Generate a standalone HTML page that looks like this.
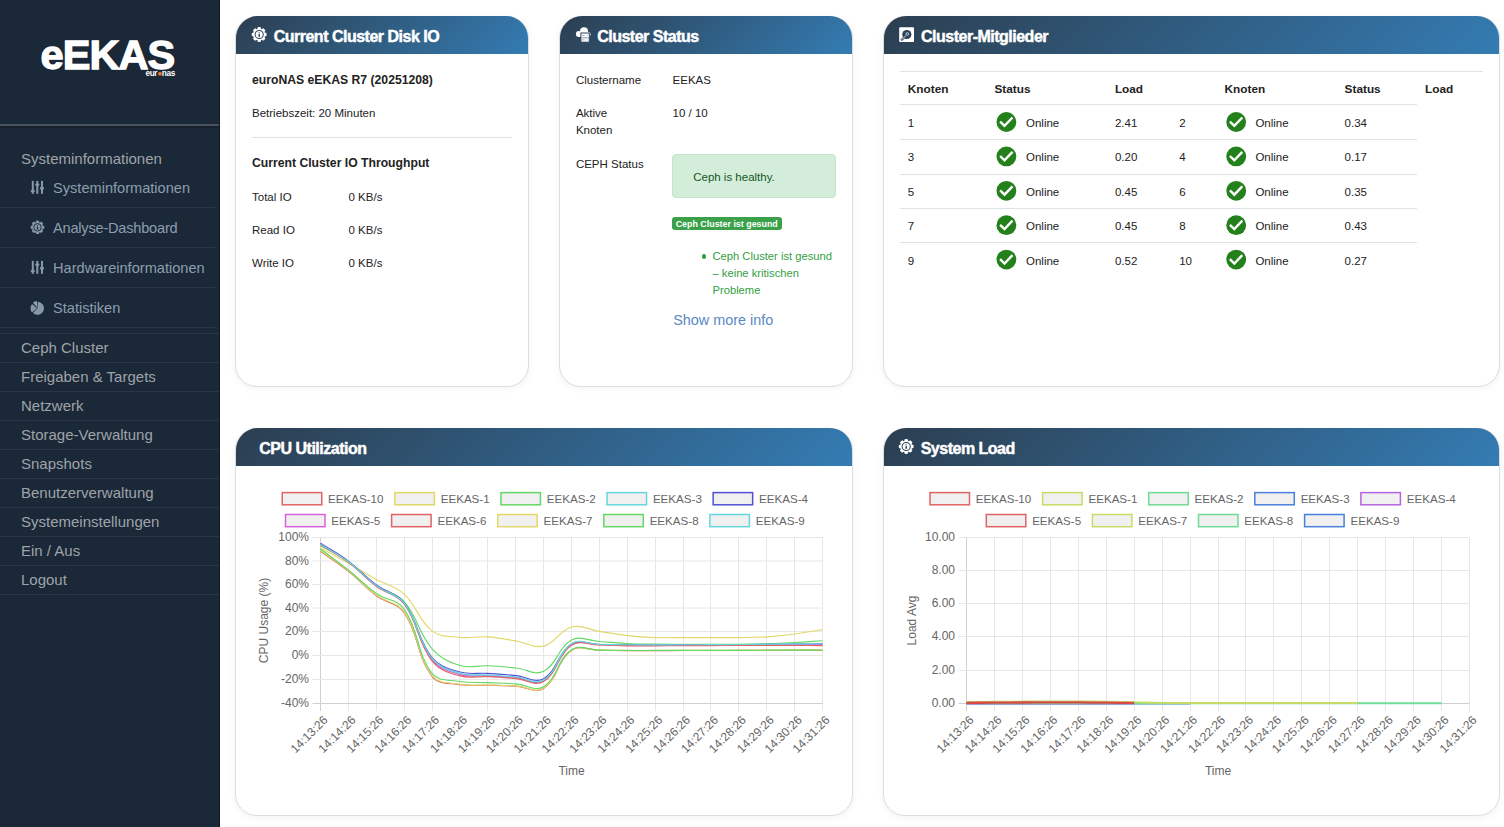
<!DOCTYPE html><html><head><meta charset="utf-8"><style>
*{box-sizing:border-box;margin:0;padding:0}
html,body{width:1504px;height:827px;overflow:hidden}
body{font-family:"Liberation Sans",sans-serif;background:#ffffff;position:relative;color:#222}
.a{position:absolute;white-space:nowrap;line-height:1}
#sb{position:absolute;left:0;top:0;width:220px;height:827px;background:#1b2838;border-right:1px solid #101a26}
#sb .hr{position:absolute;left:0;top:124px;width:219px;height:2px;background:#4b535d;box-shadow:0 1px 2px rgba(0,0,0,.35)}
#sb .ln{position:absolute;left:0;height:1px;background:#283646}
.card{position:absolute;background:#fff;border:1px solid #dddddd;border-radius:22px;box-shadow:0 2px 7px rgba(0,0,0,.05)}
.hd{position:absolute;left:0;top:-1px;right:0;height:38px;border-radius:22px 22px 0 0;background:linear-gradient(135deg,#2c3e50 0%,#347cb3 100%)}
svg{position:absolute;overflow:visible}
</style></head><body>
<div id="sb">
<div class="a" style="left:40.5px;top:33.8px;font-size:41.5px;font-weight:bold;color:#fff;letter-spacing:-0.9px;-webkit-text-stroke:1.3px #fff">eEKAS</div>
<div class="a" style="left:145.5px;top:69.6px;font-size:8.2px;font-weight:bold;color:#fff;letter-spacing:-0.35px">eur<span style="color:#f07a22">&#9679;</span>nas</div>
<div class="hr"></div>
</div>
<div class="a" style="left:21.0px;top:151.45px;font-size:15px;color:#9fa3a8;">Systeminformationen</div>
<div class="a" style="left:53.0px;top:180.79px;font-size:14.6px;color:#8d9eae;">Systeminformationen</div>
<div class="a" style="left:53.0px;top:220.69px;font-size:14.6px;color:#8d9eae;letter-spacing:-0.22px">Analyse-Dashboard</div>
<div class="a" style="left:53.0px;top:260.59px;font-size:14.6px;color:#8d9eae;">Hardwareinformationen</div>
<div class="a" style="left:53.0px;top:300.59px;font-size:14.6px;color:#8d9eae;">Statistiken</div>
<div class="a" style="left:0;top:207px;width:215px;height:1px;background:#283646"></div>
<div class="a" style="left:0;top:247px;width:215px;height:1px;background:#283646"></div>
<div class="a" style="left:0;top:287px;width:215px;height:1px;background:#283646"></div>
<div class="a" style="left:0;top:327px;width:215px;height:1px;background:#283646"></div>
<div class="a" style="left:21.0px;top:339.75px;font-size:15px;color:#9fa3a8;">Ceph Cluster</div>
<div class="a" style="left:21.0px;top:368.75px;font-size:15px;color:#9fa3a8;">Freigaben &amp; Targets</div>
<div class="a" style="left:21.0px;top:397.75px;font-size:15px;color:#9fa3a8;">Netzwerk</div>
<div class="a" style="left:21.0px;top:426.75px;font-size:15px;color:#9fa3a8;">Storage-Verwaltung</div>
<div class="a" style="left:21.0px;top:455.75px;font-size:15px;color:#9fa3a8;">Snapshots</div>
<div class="a" style="left:21.0px;top:484.75px;font-size:15px;color:#9fa3a8;">Benutzerverwaltung</div>
<div class="a" style="left:21.0px;top:513.75px;font-size:15px;color:#9fa3a8;">Systemeinstellungen</div>
<div class="a" style="left:21.0px;top:542.75px;font-size:15px;color:#9fa3a8;">Ein / Aus</div>
<div class="a" style="left:21.0px;top:571.75px;font-size:15px;color:#9fa3a8;">Logout</div>
<div class="a" style="left:0;top:333px;width:219px;height:1px;background:#283646"></div>
<div class="a" style="left:0;top:362px;width:219px;height:1px;background:#283646"></div>
<div class="a" style="left:0;top:391px;width:219px;height:1px;background:#283646"></div>
<div class="a" style="left:0;top:420px;width:219px;height:1px;background:#283646"></div>
<div class="a" style="left:0;top:449px;width:219px;height:1px;background:#283646"></div>
<div class="a" style="left:0;top:478px;width:219px;height:1px;background:#283646"></div>
<div class="a" style="left:0;top:507px;width:219px;height:1px;background:#283646"></div>
<div class="a" style="left:0;top:536px;width:219px;height:1px;background:#283646"></div>
<div class="a" style="left:0;top:565px;width:219px;height:1px;background:#283646"></div>
<div class="a" style="left:0;top:594px;width:219px;height:1px;background:#283646"></div>
<svg style="left:31px;top:176px" width="16" height="16" viewBox="0 0 16 16"><rect x="0.8" y="4.9" width="2" height="12.9" fill="#8798a8"/><rect x="-0.19999999999999996" y="13.9" width="4" height="2.4" rx="0.8" fill="#8798a8"/><rect x="5.3" y="4.9" width="2" height="12.9" fill="#8798a8"/><rect x="4.3" y="7.3999999999999995" width="4" height="2.4" rx="0.8" fill="#8798a8"/><rect x="10" y="4.9" width="2" height="12.9" fill="#8798a8"/><rect x="9" y="11.100000000000001" width="4" height="2.4" rx="0.8" fill="#8798a8"/></svg>
<svg style="left:0;top:0" width="1" height="1"><path d="M35.73,222.16 L36.09,220.65 A6.80,6.80 0 0 1 38.91,220.65 L39.27,222.16 A5.44,5.44 0 0 1 39.88,222.41 L41.20,221.60 A6.80,6.80 0 0 1 43.20,223.60 L42.39,224.92 A5.44,5.44 0 0 1 42.64,225.53 L44.15,225.89 A6.80,6.80 0 0 1 44.15,228.71 L42.64,229.07 A5.44,5.44 0 0 1 42.39,229.68 L43.20,231.00 A6.80,6.80 0 0 1 41.20,233.00 L39.88,232.19 A5.44,5.44 0 0 1 39.27,232.44 L38.91,233.95 A6.80,6.80 0 0 1 36.09,233.95 L35.73,232.44 A5.44,5.44 0 0 1 35.12,232.19 L33.80,233.00 A6.80,6.80 0 0 1 31.80,231.00 L32.61,229.68 A5.44,5.44 0 0 1 32.36,229.07 L30.85,228.71 A6.80,6.80 0 0 1 30.85,225.89 L32.36,225.53 A5.44,5.44 0 0 1 32.61,224.92 L31.80,223.60 A6.80,6.80 0 0 1 33.80,221.60 L35.12,222.41 A5.44,5.44 0 0 1 35.73,222.16 Z" fill="#8798a8"/><circle cx="37.5" cy="227.3" r="3.74" fill="none" stroke="#1b2838" stroke-width="0.95"/><rect x="36.82" y="226.96" width="1.36" height="2.45" fill="#1b2838"/><circle cx="37.5" cy="225.80" r="0.68" fill="#1b2838"/></svg>
<svg style="left:31px;top:256px" width="16" height="16" viewBox="0 0 16 16"><rect x="0.8" y="4.9" width="2" height="12.9" fill="#8798a8"/><rect x="-0.19999999999999996" y="13.9" width="4" height="2.4" rx="0.8" fill="#8798a8"/><rect x="5.3" y="4.9" width="2" height="12.9" fill="#8798a8"/><rect x="4.3" y="7.3999999999999995" width="4" height="2.4" rx="0.8" fill="#8798a8"/><rect x="10" y="4.9" width="2" height="12.9" fill="#8798a8"/><rect x="9" y="11.100000000000001" width="4" height="2.4" rx="0.8" fill="#8798a8"/></svg>
<svg style="left:0;top:0" width="1" height="1"><path d="M37.50,308.30 L37.73,301.80 A6.5,6.5 0 1 1 33.07,313.05 Z" fill="#8798a8"/><path d="M37.00,308.30 L32.09,312.56 A6.5,6.5 0 0 1 32.09,304.04 Z" fill="#8798a8"/><path d="M37.20,307.40 L32.94,302.67 A6.37,6.37 0 0 1 36.76,301.05 Z" fill="#93a5b5"/></svg>
<div class="card" style="left:235px;top:16px;width:294px;height:371px"><div class="hd"></div></div>
<div class="a" style="left:273.7px;top:28.70px;font-size:16px;font-weight:bold;color:#fff;letter-spacing:-0.5px;-webkit-text-stroke:0.45px #fff">Current Cluster Disk IO</div>
<div class="card" style="left:559px;top:16px;width:294px;height:371px"><div class="hd"></div></div>
<div class="a" style="left:597.2px;top:28.70px;font-size:16px;font-weight:bold;color:#fff;letter-spacing:-0.5px;-webkit-text-stroke:0.45px #fff">Cluster Status</div>
<div class="card" style="left:883px;top:16px;width:617px;height:371px"><div class="hd"></div></div>
<div class="a" style="left:921.0px;top:28.70px;font-size:16px;font-weight:bold;color:#fff;letter-spacing:-0.5px;-webkit-text-stroke:0.45px #fff">Cluster-Mitglieder</div>
<div class="card" style="left:235px;top:428px;width:618px;height:388px"><div class="hd"></div></div>
<div class="a" style="left:259.3px;top:440.70px;font-size:16px;font-weight:bold;color:#fff;letter-spacing:-0.5px;-webkit-text-stroke:0.45px #fff">CPU Utilization</div>
<div class="card" style="left:883px;top:428px;width:617px;height:388px"><div class="hd"></div></div>
<div class="a" style="left:920.7px;top:440.70px;font-size:16px;font-weight:bold;color:#fff;letter-spacing:-0.5px;-webkit-text-stroke:0.45px #fff">System Load</div>
<svg style="left:0;top:0" width="1" height="1"><path d="M257.27,28.90 L257.66,27.26 A7.40,7.40 0 0 1 260.74,27.26 L261.13,28.90 A5.92,5.92 0 0 1 261.80,29.18 L263.23,28.29 A7.40,7.40 0 0 1 265.41,30.47 L264.52,31.90 A5.92,5.92 0 0 1 264.80,32.57 L266.44,32.96 A7.40,7.40 0 0 1 266.44,36.04 L264.80,36.43 A5.92,5.92 0 0 1 264.52,37.10 L265.41,38.53 A7.40,7.40 0 0 1 263.23,40.71 L261.80,39.82 A5.92,5.92 0 0 1 261.13,40.10 L260.74,41.74 A7.40,7.40 0 0 1 257.66,41.74 L257.27,40.10 A5.92,5.92 0 0 1 256.60,39.82 L255.17,40.71 A7.40,7.40 0 0 1 252.99,38.53 L253.88,37.10 A5.92,5.92 0 0 1 253.60,36.43 L251.96,36.04 A7.40,7.40 0 0 1 251.96,32.96 L253.60,32.57 A5.92,5.92 0 0 1 253.88,31.90 L252.99,30.47 A7.40,7.40 0 0 1 255.17,28.29 L256.60,29.18 A5.92,5.92 0 0 1 257.27,28.90 Z" fill="#fff"/><circle cx="259.2" cy="34.5" r="4.07" fill="none" stroke="#2d425a" stroke-width="1.04"/><rect x="258.46" y="34.13" width="1.48" height="2.66" fill="#2d425a"/><circle cx="259.2" cy="32.87" r="0.74" fill="#2d425a"/></svg>
<svg style="left:0;top:0" width="1" height="1"><path d="M904.27,440.90 L904.66,439.26 A7.40,7.40 0 0 1 907.74,439.26 L908.13,440.90 A5.92,5.92 0 0 1 908.80,441.18 L910.23,440.29 A7.40,7.40 0 0 1 912.41,442.47 L911.52,443.90 A5.92,5.92 0 0 1 911.80,444.57 L913.44,444.96 A7.40,7.40 0 0 1 913.44,448.04 L911.80,448.43 A5.92,5.92 0 0 1 911.52,449.10 L912.41,450.53 A7.40,7.40 0 0 1 910.23,452.71 L908.80,451.82 A5.92,5.92 0 0 1 908.13,452.10 L907.74,453.74 A7.40,7.40 0 0 1 904.66,453.74 L904.27,452.10 A5.92,5.92 0 0 1 903.60,451.82 L902.17,452.71 A7.40,7.40 0 0 1 899.99,450.53 L900.88,449.10 A5.92,5.92 0 0 1 900.60,448.43 L898.96,448.04 A7.40,7.40 0 0 1 898.96,444.96 L900.60,444.57 A5.92,5.92 0 0 1 900.88,443.90 L899.99,442.47 A7.40,7.40 0 0 1 902.17,440.29 L903.60,441.18 A5.92,5.92 0 0 1 904.27,440.90 Z" fill="#fff"/><circle cx="906.2" cy="446.5" r="4.07" fill="none" stroke="#2d425a" stroke-width="1.04"/><rect x="905.46" y="446.13" width="1.48" height="2.66" fill="#2d425a"/><circle cx="906.2" cy="444.87" r="0.74" fill="#2d425a"/></svg>
<svg style="left:0;top:0" width="1" height="1">
<g fill="#fff"><circle cx="578.9" cy="33.9" r="3.0"/><circle cx="584" cy="31.2" r="4.0"/><circle cx="588" cy="34.2" r="2.5"/><rect x="578.9" y="33" width="9.2" height="3.9"/></g>
<rect x="580.9" y="33.0" width="8.4" height="9.2" fill="#fff" stroke="#2d4259" stroke-width="1"/>
<rect x="581.4" y="37.4" width="7.4" height="0.9" fill="#7d8c9b"/>
<rect x="582.1" y="35.2" width="2.6" height="0.7" fill="#8796a5"/><rect x="582.1" y="39.6" width="2.6" height="0.7" fill="#8796a5"/>
<circle cx="587.6" cy="35.5" r="0.45" fill="#8796a5"/><circle cx="587.6" cy="39.9" r="0.45" fill="#8796a5"/>
</svg>
<svg style="left:0;top:0" width="1" height="1">
<rect x="899.2" y="27.2" width="14.8" height="14.8" rx="0.8" fill="#fff"/>
<circle cx="906.8" cy="34.5" r="4.6" fill="#2c4157"/>
<circle cx="907.2" cy="34" r="1.4" fill="none" stroke="#fff" stroke-width="0.7"/>
<line x1="906.3" y1="35.2" x2="901.2" y2="40.2" stroke="#2c4157" stroke-width="2.2"/>
<line x1="906" y1="35.4" x2="901.6" y2="39.8" stroke="#fff" stroke-width="0.8"/>
</svg>
<div class="a" style="left:252.0px;top:73.83px;font-size:12.2px;font-weight:bold;color:#222;">euroNAS eEKAS R7 (20251208)</div>
<div class="a" style="left:252.0px;top:107.52px;font-size:11.5px;color:#222;">Betriebszeit: 20 Minuten</div>
<div class="a" style="left:252px;top:137px;width:260px;height:1px;background:#e2e2e2"></div>
<div class="a" style="left:252.0px;top:156.93px;font-size:12.2px;font-weight:bold;color:#222;">Current Cluster IO Throughput</div>
<div class="a" style="left:252.0px;top:191.53px;font-size:11.5px;color:#222;">Total IO</div>
<div class="a" style="left:348.5px;top:191.53px;font-size:11.5px;color:#222;">0 KB/s</div>
<div class="a" style="left:252.0px;top:224.53px;font-size:11.5px;color:#222;">Read IO</div>
<div class="a" style="left:348.5px;top:224.53px;font-size:11.5px;color:#222;">0 KB/s</div>
<div class="a" style="left:252.0px;top:257.53px;font-size:11.5px;color:#222;">Write IO</div>
<div class="a" style="left:348.5px;top:257.53px;font-size:11.5px;color:#222;">0 KB/s</div>
<div class="a" style="left:575.9px;top:75.12px;font-size:11.5px;color:#222;">Clustername</div>
<div class="a" style="left:672.6px;top:75.12px;font-size:11.5px;color:#222;">EEKAS</div>
<div class="a" style="left:575.9px;top:107.92px;font-size:11.5px;color:#222;">Aktive</div>
<div class="a" style="left:575.9px;top:124.72px;font-size:11.5px;color:#222;">Knoten</div>
<div class="a" style="left:672.6px;top:107.92px;font-size:11.5px;color:#222;">10 / 10</div>
<div class="a" style="left:575.9px;top:159.03px;font-size:11.5px;color:#222;">CEPH Status</div>
<div class="a" style="left:672px;top:154px;width:164px;height:44px;background:#d4edda;border:1px solid #c3e6cb;border-radius:4px"></div>
<div class="a" style="left:693.2px;top:171.92px;font-size:11.5px;color:#155724;">Ceph is healthy.</div>
<div class="a" style="left:672.4px;top:217.2px;width:109.5px;height:12.7px;background:#3aa14a;border-radius:3px"></div>
<div class="a" style="left:675.7px;top:219.84px;font-size:8.9px;font-weight:bold;color:#fff;">Ceph Cluster ist gesund</div>
<div class="a" style="left:702.3px;top:254.4px;width:4.2px;height:4.2px;border-radius:50%;background:#34a044"></div>
<div class="a" style="left:712.5px;top:250.98px;font-size:11.2px;color:#34a044;">Ceph Cluster ist gesund</div>
<div class="a" style="left:712.5px;top:268.08px;font-size:11.2px;color:#34a044;">&ndash; keine kritischen</div>
<div class="a" style="left:712.5px;top:285.28px;font-size:11.2px;color:#34a044;">Probleme</div>
<div class="a" style="left:673.2px;top:313.06px;font-size:14.4px;color:#5a88c4;">Show more info</div>
<div class="a" style="left:900px;top:71px;width:583px;height:1px;background:#dfe3e8"></div>
<div class="a" style="left:900px;top:104px;width:517px;height:1px;background:#dfe3e8"></div>
<div class="a" style="left:900px;top:139px;width:517px;height:1px;background:#dfe3e8"></div>
<div class="a" style="left:900px;top:173.5px;width:517px;height:1px;background:#dfe3e8"></div>
<div class="a" style="left:900px;top:207.5px;width:517px;height:1px;background:#dfe3e8"></div>
<div class="a" style="left:900px;top:242px;width:517px;height:1px;background:#dfe3e8"></div>
<div class="a" style="left:907.8px;top:84.17px;font-size:11.8px;font-weight:bold;color:#222;">Knoten</div>
<div class="a" style="left:994.4px;top:84.17px;font-size:11.8px;font-weight:bold;color:#222;">Status</div>
<div class="a" style="left:1114.9px;top:84.17px;font-size:11.8px;font-weight:bold;color:#222;">Load</div>
<div class="a" style="left:1224.6px;top:84.17px;font-size:11.8px;font-weight:bold;color:#222;">Knoten</div>
<div class="a" style="left:1344.6px;top:84.17px;font-size:11.8px;font-weight:bold;color:#222;">Status</div>
<div class="a" style="left:1425.0px;top:84.17px;font-size:11.8px;font-weight:bold;color:#222;">Load</div>
<div class="a" style="left:907.8px;top:117.92px;font-size:11.5px;color:#222;">1</div>
<div class="a" style="left:1114.9px;top:117.92px;font-size:11.5px;color:#222;">2.41</div>
<div class="a" style="left:1179.2px;top:117.92px;font-size:11.5px;color:#222;">2</div>
<div class="a" style="left:1344.6px;top:117.92px;font-size:11.5px;color:#222;">0.34</div>
<div class="a" style="left:1026.0px;top:117.92px;font-size:11.5px;color:#222;">Online</div>
<div class="a" style="left:1255.4px;top:117.92px;font-size:11.5px;color:#222;">Online</div>
<div class="a" style="left:907.8px;top:152.32px;font-size:11.5px;color:#222;">3</div>
<div class="a" style="left:1114.9px;top:152.32px;font-size:11.5px;color:#222;">0.20</div>
<div class="a" style="left:1179.2px;top:152.32px;font-size:11.5px;color:#222;">4</div>
<div class="a" style="left:1344.6px;top:152.32px;font-size:11.5px;color:#222;">0.17</div>
<div class="a" style="left:1026.0px;top:152.32px;font-size:11.5px;color:#222;">Online</div>
<div class="a" style="left:1255.4px;top:152.32px;font-size:11.5px;color:#222;">Online</div>
<div class="a" style="left:907.8px;top:186.72px;font-size:11.5px;color:#222;">5</div>
<div class="a" style="left:1114.9px;top:186.72px;font-size:11.5px;color:#222;">0.45</div>
<div class="a" style="left:1179.2px;top:186.72px;font-size:11.5px;color:#222;">6</div>
<div class="a" style="left:1344.6px;top:186.72px;font-size:11.5px;color:#222;">0.35</div>
<div class="a" style="left:1026.0px;top:186.72px;font-size:11.5px;color:#222;">Online</div>
<div class="a" style="left:1255.4px;top:186.72px;font-size:11.5px;color:#222;">Online</div>
<div class="a" style="left:907.8px;top:221.12px;font-size:11.5px;color:#222;">7</div>
<div class="a" style="left:1114.9px;top:221.12px;font-size:11.5px;color:#222;">0.45</div>
<div class="a" style="left:1179.2px;top:221.12px;font-size:11.5px;color:#222;">8</div>
<div class="a" style="left:1344.6px;top:221.12px;font-size:11.5px;color:#222;">0.43</div>
<div class="a" style="left:1026.0px;top:221.12px;font-size:11.5px;color:#222;">Online</div>
<div class="a" style="left:1255.4px;top:221.12px;font-size:11.5px;color:#222;">Online</div>
<div class="a" style="left:907.8px;top:255.53px;font-size:11.5px;color:#222;">9</div>
<div class="a" style="left:1114.9px;top:255.53px;font-size:11.5px;color:#222;">0.52</div>
<div class="a" style="left:1179.2px;top:255.53px;font-size:11.5px;color:#222;">10</div>
<div class="a" style="left:1344.6px;top:255.53px;font-size:11.5px;color:#222;">0.27</div>
<div class="a" style="left:1026.0px;top:255.53px;font-size:11.5px;color:#222;">Online</div>
<div class="a" style="left:1255.4px;top:255.53px;font-size:11.5px;color:#222;">Online</div>
<svg style="left:0;top:0" width="1" height="1"><circle cx="1006.4" cy="122.0" r="9.9" fill="#23801b"/><path d="M1000.1,121.6 L1004.5,125.9 L1012.5,117.5" fill="none" stroke="#fff" stroke-width="2.4"/><circle cx="1236.2" cy="122.0" r="9.9" fill="#23801b"/><path d="M1229.9,121.6 L1234.3,125.9 L1242.3,117.5" fill="none" stroke="#fff" stroke-width="2.4"/><circle cx="1006.4" cy="156.4" r="9.9" fill="#23801b"/><path d="M1000.1,156.0 L1004.5,160.3 L1012.5,151.9" fill="none" stroke="#fff" stroke-width="2.4"/><circle cx="1236.2" cy="156.4" r="9.9" fill="#23801b"/><path d="M1229.9,156.0 L1234.3,160.3 L1242.3,151.9" fill="none" stroke="#fff" stroke-width="2.4"/><circle cx="1006.4" cy="190.8" r="9.9" fill="#23801b"/><path d="M1000.1,190.4 L1004.5,194.7 L1012.5,186.3" fill="none" stroke="#fff" stroke-width="2.4"/><circle cx="1236.2" cy="190.8" r="9.9" fill="#23801b"/><path d="M1229.9,190.4 L1234.3,194.7 L1242.3,186.3" fill="none" stroke="#fff" stroke-width="2.4"/><circle cx="1006.4" cy="225.2" r="9.9" fill="#23801b"/><path d="M1000.1,224.8 L1004.5,229.1 L1012.5,220.7" fill="none" stroke="#fff" stroke-width="2.4"/><circle cx="1236.2" cy="225.2" r="9.9" fill="#23801b"/><path d="M1229.9,224.8 L1234.3,229.1 L1242.3,220.7" fill="none" stroke="#fff" stroke-width="2.4"/><circle cx="1006.4" cy="259.6" r="9.9" fill="#23801b"/><path d="M1000.1,259.2 L1004.5,263.5 L1012.5,255.1" fill="none" stroke="#fff" stroke-width="2.4"/><circle cx="1236.2" cy="259.6" r="9.9" fill="#23801b"/><path d="M1229.9,259.2 L1234.3,263.5 L1242.3,255.1" fill="none" stroke="#fff" stroke-width="2.4"/></svg>
<svg style="left:0;top:0" width="1504" height="827" font-family="Liberation Sans, sans-serif"><line x1="320.5" y1="537.5" x2="320.5" y2="711.0" stroke="#cfcfcf" stroke-width="1"/><line x1="348.5" y1="537.5" x2="348.5" y2="711.0" stroke="#e6e6e6" stroke-width="1"/><line x1="376.5" y1="537.5" x2="376.5" y2="711.0" stroke="#e6e6e6" stroke-width="1"/><line x1="404.5" y1="537.5" x2="404.5" y2="711.0" stroke="#e6e6e6" stroke-width="1"/><line x1="432.5" y1="537.5" x2="432.5" y2="711.0" stroke="#e6e6e6" stroke-width="1"/><line x1="459.5" y1="537.5" x2="459.5" y2="711.0" stroke="#e6e6e6" stroke-width="1"/><line x1="487.5" y1="537.5" x2="487.5" y2="711.0" stroke="#e6e6e6" stroke-width="1"/><line x1="515.5" y1="537.5" x2="515.5" y2="711.0" stroke="#e6e6e6" stroke-width="1"/><line x1="543.5" y1="537.5" x2="543.5" y2="711.0" stroke="#e6e6e6" stroke-width="1"/><line x1="571.5" y1="537.5" x2="571.5" y2="711.0" stroke="#e6e6e6" stroke-width="1"/><line x1="599.5" y1="537.5" x2="599.5" y2="711.0" stroke="#e6e6e6" stroke-width="1"/><line x1="627.5" y1="537.5" x2="627.5" y2="711.0" stroke="#e6e6e6" stroke-width="1"/><line x1="655.5" y1="537.5" x2="655.5" y2="711.0" stroke="#e6e6e6" stroke-width="1"/><line x1="683.5" y1="537.5" x2="683.5" y2="711.0" stroke="#e6e6e6" stroke-width="1"/><line x1="710.5" y1="537.5" x2="710.5" y2="711.0" stroke="#e6e6e6" stroke-width="1"/><line x1="738.5" y1="537.5" x2="738.5" y2="711.0" stroke="#e6e6e6" stroke-width="1"/><line x1="766.5" y1="537.5" x2="766.5" y2="711.0" stroke="#e6e6e6" stroke-width="1"/><line x1="794.5" y1="537.5" x2="794.5" y2="711.0" stroke="#e6e6e6" stroke-width="1"/><line x1="822.5" y1="537.5" x2="822.5" y2="711.0" stroke="#e6e6e6" stroke-width="1"/><line x1="312.5" y1="537.5" x2="822.5" y2="537.5" stroke="#e6e6e6" stroke-width="1"/><line x1="312.5" y1="561.0" x2="822.5" y2="561.0" stroke="#e6e6e6" stroke-width="1"/><line x1="312.5" y1="584.5" x2="822.5" y2="584.5" stroke="#e6e6e6" stroke-width="1"/><line x1="312.5" y1="608.0" x2="822.5" y2="608.0" stroke="#e6e6e6" stroke-width="1"/><line x1="312.5" y1="631.5" x2="822.5" y2="631.5" stroke="#e6e6e6" stroke-width="1"/><line x1="312.5" y1="655.5" x2="822.5" y2="655.5" stroke="#e6e6e6" stroke-width="1"/><line x1="312.5" y1="679.5" x2="822.5" y2="679.5" stroke="#e6e6e6" stroke-width="1"/><line x1="312.5" y1="703.5" x2="822.5" y2="703.5" stroke="#cfcfcf" stroke-width="1"/><text x="309" y="541.0" text-anchor="end" font-size="12" fill="#666">100%</text><text x="309" y="564.5" text-anchor="end" font-size="12" fill="#666">80%</text><text x="309" y="588.0" text-anchor="end" font-size="12" fill="#666">60%</text><text x="309" y="611.5" text-anchor="end" font-size="12" fill="#666">40%</text><text x="309" y="635.0" text-anchor="end" font-size="12" fill="#666">20%</text><text x="309" y="659.0" text-anchor="end" font-size="12" fill="#666">0%</text><text x="309" y="683.0" text-anchor="end" font-size="12" fill="#666">-20%</text><text x="309" y="707.0" text-anchor="end" font-size="12" fill="#666">-40%</text><text transform="translate(328.50,720.70) rotate(-45)" text-anchor="end" font-size="12" fill="#666">14:13:26</text><text transform="translate(356.39,720.70) rotate(-45)" text-anchor="end" font-size="12" fill="#666">14:14:26</text><text transform="translate(384.28,720.70) rotate(-45)" text-anchor="end" font-size="12" fill="#666">14:15:26</text><text transform="translate(412.17,720.70) rotate(-45)" text-anchor="end" font-size="12" fill="#666">14:16:26</text><text transform="translate(440.06,720.70) rotate(-45)" text-anchor="end" font-size="12" fill="#666">14:17:26</text><text transform="translate(467.94,720.70) rotate(-45)" text-anchor="end" font-size="12" fill="#666">14:18:26</text><text transform="translate(495.83,720.70) rotate(-45)" text-anchor="end" font-size="12" fill="#666">14:19:26</text><text transform="translate(523.72,720.70) rotate(-45)" text-anchor="end" font-size="12" fill="#666">14:20:26</text><text transform="translate(551.61,720.70) rotate(-45)" text-anchor="end" font-size="12" fill="#666">14:21:26</text><text transform="translate(579.50,720.70) rotate(-45)" text-anchor="end" font-size="12" fill="#666">14:22:26</text><text transform="translate(607.39,720.70) rotate(-45)" text-anchor="end" font-size="12" fill="#666">14:23:26</text><text transform="translate(635.28,720.70) rotate(-45)" text-anchor="end" font-size="12" fill="#666">14:24:26</text><text transform="translate(663.17,720.70) rotate(-45)" text-anchor="end" font-size="12" fill="#666">14:25:26</text><text transform="translate(691.06,720.70) rotate(-45)" text-anchor="end" font-size="12" fill="#666">14:26:26</text><text transform="translate(718.94,720.70) rotate(-45)" text-anchor="end" font-size="12" fill="#666">14:27:26</text><text transform="translate(746.83,720.70) rotate(-45)" text-anchor="end" font-size="12" fill="#666">14:28:26</text><text transform="translate(774.72,720.70) rotate(-45)" text-anchor="end" font-size="12" fill="#666">14:29:26</text><text transform="translate(802.61,720.70) rotate(-45)" text-anchor="end" font-size="12" fill="#666">14:30:26</text><text transform="translate(830.50,720.70) rotate(-45)" text-anchor="end" font-size="12" fill="#666">14:31:26</text><text x="571.5" y="774.5" text-anchor="middle" font-size="12" fill="#666">Time</text><text transform="translate(267.5,620.5) rotate(-90)" text-anchor="middle" font-size="12" fill="#666">CPU Usage (%)</text><path d="M320.50,551.19 C331.66,559.26 337.64,562.79 348.39,571.37 C359.95,580.58 364.42,586.92 376.28,595.67 C386.73,603.39 397.05,602.26 404.17,612.55 C419.37,634.54 416.32,656.04 432.06,676.39 C438.63,684.88 448.56,682.84 459.94,684.65 C470.87,686.38 476.68,684.93 487.83,685.24 C498.99,685.54 504.58,685.52 515.72,686.18 C526.89,686.84 535.33,693.88 543.61,688.54 C557.64,679.49 557.45,659.82 571.50,650.19 C579.76,644.53 588.23,650.21 599.39,650.31 C610.54,650.40 616.12,650.59 627.28,650.66 C638.43,650.73 644.01,650.69 655.17,650.66 C666.32,650.64 671.90,650.57 683.06,650.54 C694.21,650.52 699.79,650.57 710.94,650.54 C722.10,650.52 727.68,650.47 738.83,650.43 C749.99,650.38 755.57,650.36 766.72,650.31 C777.88,650.26 783.46,650.21 794.61,650.19 C805.77,650.17 811.34,650.19 822.50,650.19" fill="none" stroke="#e06464" stroke-width="1.15"/><path d="M320.50,547.88 C331.66,554.02 337.30,556.96 348.39,563.22 C359.62,569.57 365.00,573.14 376.28,579.39 C387.31,585.51 395.10,585.78 404.17,594.14 C417.41,606.36 418.29,620.18 432.06,630.84 C440.60,637.46 448.64,636.11 459.94,637.33 C470.95,638.52 476.73,636.15 487.83,636.86 C499.05,637.57 504.61,639.01 515.72,640.87 C526.92,642.74 533.44,648.72 543.61,646.18 C555.75,643.15 559.33,630.19 571.50,626.94 C581.64,624.24 588.23,629.59 599.39,631.31 C610.54,633.03 616.07,634.30 627.28,635.56 C638.38,636.80 644.00,637.16 655.17,637.56 C666.31,637.96 671.90,637.56 683.06,637.56 C694.21,637.56 699.79,637.56 710.94,637.56 C722.10,637.56 727.68,637.71 738.83,637.56 C749.99,637.42 755.59,637.56 766.72,636.86 C777.90,636.15 783.50,635.48 794.61,634.02 C805.81,632.56 811.34,631.33 822.50,629.54" fill="none" stroke="#e2d86a" stroke-width="1.15"/><path d="M320.50,545.76 C331.66,552.13 337.95,554.29 348.39,561.69 C360.26,570.10 364.45,576.80 376.28,585.29 C386.76,592.80 395.88,592.26 404.17,601.69 C418.19,617.65 418.06,632.76 432.06,648.77 C440.37,658.30 447.93,661.87 459.94,665.53 C470.24,668.67 476.70,665.27 487.83,665.77 C499.01,666.26 504.59,666.90 515.72,668.01 C526.90,669.12 534.66,675.80 543.61,671.31 C556.97,664.61 558.11,647.21 571.50,640.04 C580.42,635.27 588.24,640.77 599.39,641.46 C610.55,642.14 616.11,642.92 627.28,643.46 C638.42,644.01 644.01,644.01 655.17,644.17 C666.32,644.34 671.90,644.27 683.06,644.29 C694.21,644.31 699.79,644.29 710.94,644.29 C722.10,644.29 727.68,644.41 738.83,644.29 C749.99,644.17 755.57,644.05 766.72,643.70 C777.88,643.35 783.46,643.11 794.61,642.52 C805.77,641.93 811.34,641.46 822.50,640.75" fill="none" stroke="#64d864" stroke-width="1.15"/><path d="M320.50,543.99 C331.66,551.07 337.82,553.82 348.39,561.69 C360.13,570.43 364.55,576.77 376.28,585.53 C386.86,593.43 396.41,593.15 404.17,603.34 C418.72,622.46 417.28,640.14 432.06,658.80 C439.59,668.32 448.09,670.28 459.94,673.79 C470.40,676.89 476.68,674.62 487.83,675.32 C498.99,676.03 504.58,676.34 515.72,677.33 C526.89,678.32 535.14,685.35 543.61,680.28 C557.45,671.99 557.63,652.82 571.50,643.94 C579.94,638.52 588.23,644.31 599.39,644.53 C610.54,644.74 616.12,644.90 627.28,645.00 C638.43,645.09 644.01,645.02 655.17,645.00 C666.32,644.97 671.90,644.90 683.06,644.88 C694.21,644.86 699.79,644.90 710.94,644.88 C722.10,644.86 727.68,644.83 738.83,644.76 C749.99,644.69 755.57,644.62 766.72,644.53 C777.88,644.43 783.46,644.36 794.61,644.29 C805.77,644.22 811.34,644.22 822.50,644.17" fill="none" stroke="#64d8dc" stroke-width="1.15"/><path d="M320.50,543.16 C331.66,550.34 337.80,553.17 348.39,561.10 C360.11,569.88 364.55,576.18 376.28,584.94 C386.86,592.84 396.36,592.59 404.17,602.75 C418.67,621.62 417.30,639.18 432.06,657.51 C439.61,666.88 448.13,668.67 459.94,672.02 C470.44,674.99 476.69,672.61 487.83,673.32 C499.00,674.03 504.58,674.50 515.72,675.56 C526.89,676.62 534.99,683.52 543.61,678.63 C557.30,670.87 557.78,652.32 571.50,643.94 C580.10,638.68 588.23,644.34 599.39,644.53 C610.54,644.71 616.12,644.79 627.28,644.88 C638.43,644.97 644.01,645.00 655.17,645.00 C666.32,645.00 671.90,644.93 683.06,644.88 C694.21,644.83 699.79,644.81 710.94,644.76 C722.10,644.71 727.68,644.71 738.83,644.64 C749.99,644.57 755.57,644.50 766.72,644.41 C777.88,644.31 783.46,644.27 794.61,644.17 C805.77,644.08 811.34,644.03 822.50,643.94" fill="none" stroke="#5050d8" stroke-width="1.15"/><path d="M320.50,544.58 C331.66,551.52 337.86,554.13 348.39,561.93 C360.17,570.65 364.53,577.10 376.28,585.88 C386.84,593.77 396.46,593.39 404.17,603.58 C418.77,622.89 417.24,640.76 432.06,659.63 C439.55,669.17 448.09,671.15 459.94,674.62 C470.40,677.67 476.69,675.25 487.83,675.91 C499.00,676.58 504.58,676.93 515.72,677.92 C526.89,678.91 535.14,685.94 543.61,680.87 C557.45,672.58 557.63,653.50 571.50,644.53 C579.94,639.06 588.23,644.60 599.39,644.76 C610.55,644.93 616.12,645.23 627.28,645.35 C638.43,645.47 644.01,645.38 655.17,645.35 C666.32,645.33 671.90,645.28 683.06,645.23 C694.21,645.19 699.79,645.16 710.94,645.12 C722.10,645.07 727.68,645.07 738.83,645.00 C749.99,644.93 755.57,644.86 766.72,644.76 C777.88,644.67 783.46,644.55 794.61,644.53 C805.77,644.50 811.34,644.60 822.50,644.64" fill="none" stroke="#d860dc" stroke-width="1.15"/><path d="M320.50,544.82 C331.66,551.80 337.85,554.46 348.39,562.28 C360.16,571.02 364.53,577.46 376.28,586.23 C386.84,594.12 396.52,593.71 404.17,603.93 C418.83,623.54 417.19,641.62 432.06,660.81 C439.50,670.42 448.07,672.55 459.94,675.91 C470.39,678.87 476.69,676.08 487.83,676.62 C499.00,677.17 504.58,677.64 515.72,678.63 C526.89,679.62 535.14,686.65 543.61,681.58 C557.45,673.29 557.63,654.33 571.50,645.23 C579.94,639.70 588.24,644.88 599.39,645.00 C610.55,645.12 616.12,645.66 627.28,645.82 C638.43,645.99 644.01,645.85 655.17,645.82 C666.32,645.80 671.90,645.75 683.06,645.71 C694.21,645.66 699.79,645.64 710.94,645.59 C722.10,645.54 727.68,645.52 738.83,645.47 C749.99,645.42 755.57,645.35 766.72,645.35 C777.88,645.35 783.46,645.42 794.61,645.47 C805.77,645.52 811.34,645.54 822.50,645.59" fill="none" stroke="#e06464" stroke-width="1.15"/><path d="M320.50,550.48 C331.66,558.60 337.62,562.17 348.39,570.78 C359.94,580.01 364.41,586.34 376.28,595.08 C386.72,602.77 397.06,601.58 404.17,611.84 C419.37,633.77 416.34,655.18 432.06,675.56 C438.65,684.11 448.54,682.24 459.94,684.17 C470.85,686.02 476.68,684.65 487.83,685.00 C498.99,685.35 504.58,685.33 515.72,685.94 C526.89,686.56 535.30,693.41 543.61,688.07 C557.61,679.06 557.48,659.59 571.50,650.07 C579.79,644.44 588.23,650.10 599.39,650.19 C610.54,650.28 616.12,650.47 627.28,650.54 C638.43,650.61 644.01,650.57 655.17,650.54 C666.32,650.52 671.90,650.45 683.06,650.43 C694.21,650.40 699.79,650.43 710.94,650.43 C722.10,650.43 727.68,650.45 738.83,650.43 C749.99,650.40 755.57,650.36 766.72,650.31 C777.88,650.26 783.46,650.24 794.61,650.19 C805.77,650.14 811.34,650.12 822.50,650.07" fill="none" stroke="#e2d86a" stroke-width="1.15"/><path d="M320.50,549.06 C331.66,557.47 337.46,561.38 348.39,570.07 C359.77,579.12 364.41,585.12 376.28,593.43 C386.72,600.74 397.17,599.10 404.17,609.13 C419.48,631.05 416.29,652.87 432.06,673.32 C438.60,681.81 448.57,679.56 459.94,681.46 C470.88,683.29 476.68,682.14 487.83,682.64 C498.99,683.14 504.59,683.14 515.72,683.94 C526.90,684.74 535.19,691.80 543.61,686.65 C557.50,678.16 557.59,658.96 571.50,649.84 C579.90,644.33 588.23,649.95 599.39,650.07 C610.54,650.19 616.12,650.36 627.28,650.43 C638.43,650.50 644.01,650.45 655.17,650.43 C666.32,650.40 671.90,650.33 683.06,650.31 C694.21,650.28 699.79,650.31 710.94,650.31 C722.10,650.31 727.68,650.33 738.83,650.31 C749.99,650.28 755.57,650.24 766.72,650.19 C777.88,650.14 783.46,650.10 794.61,650.07 C805.77,650.05 811.34,650.07 822.50,650.07" fill="none" stroke="#64d864" stroke-width="1.15"/><path d="M320.50,544.23 C331.66,551.26 337.83,553.97 348.39,561.81 C360.14,570.53 364.52,576.94 376.28,585.64 C386.83,593.46 396.43,593.01 404.17,603.11 C418.74,622.13 417.27,639.87 432.06,658.45 C439.58,667.91 448.11,669.70 459.94,673.20 C470.42,676.30 476.68,674.22 487.83,674.97 C498.99,675.73 504.59,675.96 515.72,676.98 C526.90,677.99 535.14,685.10 543.61,680.04 C557.45,671.79 557.63,652.59 571.50,643.70 C579.94,638.29 588.23,644.08 599.39,644.29 C610.54,644.50 616.12,644.64 627.28,644.76 C638.43,644.88 644.01,644.88 655.17,644.88 C666.32,644.88 671.90,644.81 683.06,644.76 C694.21,644.71 699.79,644.69 710.94,644.64 C722.10,644.60 727.68,644.60 738.83,644.53 C749.99,644.46 755.57,644.41 766.72,644.29 C777.88,644.17 783.46,644.05 794.61,643.94 C805.77,643.82 811.34,643.79 822.50,643.70" fill="none" stroke="#64d8dc" stroke-width="1.15"/><rect x="282.25" y="492.60" width="39.5" height="12.2" fill="#f0f0f0" stroke="#e06464" stroke-width="1.5"/><text x="328.10" y="502.90" font-size="11.6" fill="#666">EEKAS-10</text><rect x="394.85" y="492.60" width="39.5" height="12.2" fill="#f0f0f0" stroke="#e2d86a" stroke-width="1.5"/><text x="440.70" y="502.90" font-size="11.6" fill="#666">EEKAS-1</text><rect x="500.95" y="492.60" width="39.5" height="12.2" fill="#f0f0f0" stroke="#64d864" stroke-width="1.5"/><text x="546.80" y="502.90" font-size="11.6" fill="#666">EEKAS-2</text><rect x="607.05" y="492.60" width="39.5" height="12.2" fill="#f0f0f0" stroke="#64d8dc" stroke-width="1.5"/><text x="652.90" y="502.90" font-size="11.6" fill="#666">EEKAS-3</text><rect x="713.15" y="492.60" width="39.5" height="12.2" fill="#f0f0f0" stroke="#5050d8" stroke-width="1.5"/><text x="759.00" y="502.90" font-size="11.6" fill="#666">EEKAS-4</text><rect x="285.50" y="514.50" width="39.5" height="12.2" fill="#f0f0f0" stroke="#d860dc" stroke-width="1.5"/><text x="331.35" y="524.80" font-size="11.6" fill="#666">EEKAS-5</text><rect x="391.60" y="514.50" width="39.5" height="12.2" fill="#f0f0f0" stroke="#e06464" stroke-width="1.5"/><text x="437.45" y="524.80" font-size="11.6" fill="#666">EEKAS-6</text><rect x="497.70" y="514.50" width="39.5" height="12.2" fill="#f0f0f0" stroke="#e2d86a" stroke-width="1.5"/><text x="543.55" y="524.80" font-size="11.6" fill="#666">EEKAS-7</text><rect x="603.80" y="514.50" width="39.5" height="12.2" fill="#f0f0f0" stroke="#64d864" stroke-width="1.5"/><text x="649.65" y="524.80" font-size="11.6" fill="#666">EEKAS-8</text><rect x="709.90" y="514.50" width="39.5" height="12.2" fill="#f0f0f0" stroke="#64d8dc" stroke-width="1.5"/><text x="755.75" y="524.80" font-size="11.6" fill="#666">EEKAS-9</text><line x1="966.5" y1="537.5" x2="966.5" y2="711.0" stroke="#cfcfcf" stroke-width="1"/><line x1="994.5" y1="537.5" x2="994.5" y2="711.0" stroke="#e6e6e6" stroke-width="1"/><line x1="1022.5" y1="537.5" x2="1022.5" y2="711.0" stroke="#e6e6e6" stroke-width="1"/><line x1="1050.5" y1="537.5" x2="1050.5" y2="711.0" stroke="#e6e6e6" stroke-width="1"/><line x1="1078.5" y1="537.5" x2="1078.5" y2="711.0" stroke="#e6e6e6" stroke-width="1"/><line x1="1106.5" y1="537.5" x2="1106.5" y2="711.0" stroke="#e6e6e6" stroke-width="1"/><line x1="1134.5" y1="537.5" x2="1134.5" y2="711.0" stroke="#e6e6e6" stroke-width="1"/><line x1="1162.5" y1="537.5" x2="1162.5" y2="711.0" stroke="#e6e6e6" stroke-width="1"/><line x1="1190.5" y1="537.5" x2="1190.5" y2="711.0" stroke="#e6e6e6" stroke-width="1"/><line x1="1218.5" y1="537.5" x2="1218.5" y2="711.0" stroke="#e6e6e6" stroke-width="1"/><line x1="1245.5" y1="537.5" x2="1245.5" y2="711.0" stroke="#e6e6e6" stroke-width="1"/><line x1="1273.5" y1="537.5" x2="1273.5" y2="711.0" stroke="#e6e6e6" stroke-width="1"/><line x1="1301.5" y1="537.5" x2="1301.5" y2="711.0" stroke="#e6e6e6" stroke-width="1"/><line x1="1329.5" y1="537.5" x2="1329.5" y2="711.0" stroke="#e6e6e6" stroke-width="1"/><line x1="1357.5" y1="537.5" x2="1357.5" y2="711.0" stroke="#e6e6e6" stroke-width="1"/><line x1="1385.5" y1="537.5" x2="1385.5" y2="711.0" stroke="#e6e6e6" stroke-width="1"/><line x1="1413.5" y1="537.5" x2="1413.5" y2="711.0" stroke="#e6e6e6" stroke-width="1"/><line x1="1441.5" y1="537.5" x2="1441.5" y2="711.0" stroke="#e6e6e6" stroke-width="1"/><line x1="1469.5" y1="537.5" x2="1469.5" y2="711.0" stroke="#e6e6e6" stroke-width="1"/><line x1="958.5" y1="537.5" x2="1469.5" y2="537.5" stroke="#e6e6e6" stroke-width="1"/><line x1="958.5" y1="570.5" x2="1469.5" y2="570.5" stroke="#e6e6e6" stroke-width="1"/><line x1="958.5" y1="603.5" x2="1469.5" y2="603.5" stroke="#e6e6e6" stroke-width="1"/><line x1="958.5" y1="636.5" x2="1469.5" y2="636.5" stroke="#e6e6e6" stroke-width="1"/><line x1="958.5" y1="670.5" x2="1469.5" y2="670.5" stroke="#e6e6e6" stroke-width="1"/><line x1="958.5" y1="703.5" x2="1469.5" y2="703.5" stroke="#cfcfcf" stroke-width="1"/><text x="955" y="541.0" text-anchor="end" font-size="12" fill="#666">10.00</text><text x="955" y="574.0" text-anchor="end" font-size="12" fill="#666">8.00</text><text x="955" y="607.0" text-anchor="end" font-size="12" fill="#666">6.00</text><text x="955" y="640.0" text-anchor="end" font-size="12" fill="#666">4.00</text><text x="955" y="674.0" text-anchor="end" font-size="12" fill="#666">2.00</text><text x="955" y="707.0" text-anchor="end" font-size="12" fill="#666">0.00</text><text transform="translate(974.50,720.70) rotate(-45)" text-anchor="end" font-size="12" fill="#666">14:13:26</text><text transform="translate(1002.44,720.70) rotate(-45)" text-anchor="end" font-size="12" fill="#666">14:14:26</text><text transform="translate(1030.39,720.70) rotate(-45)" text-anchor="end" font-size="12" fill="#666">14:15:26</text><text transform="translate(1058.33,720.70) rotate(-45)" text-anchor="end" font-size="12" fill="#666">14:16:26</text><text transform="translate(1086.28,720.70) rotate(-45)" text-anchor="end" font-size="12" fill="#666">14:17:26</text><text transform="translate(1114.22,720.70) rotate(-45)" text-anchor="end" font-size="12" fill="#666">14:18:26</text><text transform="translate(1142.17,720.70) rotate(-45)" text-anchor="end" font-size="12" fill="#666">14:19:26</text><text transform="translate(1170.11,720.70) rotate(-45)" text-anchor="end" font-size="12" fill="#666">14:20:26</text><text transform="translate(1198.06,720.70) rotate(-45)" text-anchor="end" font-size="12" fill="#666">14:21:26</text><text transform="translate(1226.00,720.70) rotate(-45)" text-anchor="end" font-size="12" fill="#666">14:22:26</text><text transform="translate(1253.94,720.70) rotate(-45)" text-anchor="end" font-size="12" fill="#666">14:23:26</text><text transform="translate(1281.89,720.70) rotate(-45)" text-anchor="end" font-size="12" fill="#666">14:24:26</text><text transform="translate(1309.83,720.70) rotate(-45)" text-anchor="end" font-size="12" fill="#666">14:25:26</text><text transform="translate(1337.78,720.70) rotate(-45)" text-anchor="end" font-size="12" fill="#666">14:26:26</text><text transform="translate(1365.72,720.70) rotate(-45)" text-anchor="end" font-size="12" fill="#666">14:27:26</text><text transform="translate(1393.67,720.70) rotate(-45)" text-anchor="end" font-size="12" fill="#666">14:28:26</text><text transform="translate(1421.61,720.70) rotate(-45)" text-anchor="end" font-size="12" fill="#666">14:29:26</text><text transform="translate(1449.56,720.70) rotate(-45)" text-anchor="end" font-size="12" fill="#666">14:30:26</text><text transform="translate(1477.50,720.70) rotate(-45)" text-anchor="end" font-size="12" fill="#666">14:31:26</text><text x="1218.0" y="774.5" text-anchor="middle" font-size="12" fill="#666">Time</text><text transform="translate(915.5,620.5) rotate(-90)" text-anchor="middle" font-size="12" fill="#666">Load Avg</text><path d="M966.50,703.50 C977.68,703.50 983.27,703.50 994.44,703.50 C1005.62,703.50 1011.21,703.50 1022.39,703.50 C1033.57,703.50 1039.16,703.50 1050.33,703.50 C1061.51,703.50 1067.10,703.50 1078.28,703.50 C1089.46,703.50 1095.04,703.50 1106.22,703.50 C1117.40,703.50 1122.99,703.50 1134.17,703.50 C1145.34,703.50 1150.93,703.50 1162.11,703.50 C1173.29,703.50 1178.88,703.50 1190.06,703.50" fill="none" stroke="#4a80dc" stroke-width="1.8"/><path d="M966.50,703.50 C977.68,703.50 983.27,703.50 994.44,703.50 C1005.62,703.50 1011.21,703.50 1022.39,703.50 C1033.57,703.50 1039.16,703.50 1050.33,703.50 C1061.51,703.50 1067.10,703.50 1078.28,703.50 C1089.46,703.50 1095.04,703.50 1106.22,703.50 C1117.40,703.50 1122.99,703.50 1134.17,703.50" fill="none" stroke="#b464e0" stroke-width="1.8"/><path d="M966.50,703.17 C977.68,703.17 983.27,703.17 994.44,703.17 C1005.62,703.17 1011.21,703.17 1022.39,703.17 C1033.57,703.17 1039.16,703.17 1050.33,703.17 C1061.51,703.17 1067.10,703.17 1078.28,703.17 C1089.46,703.17 1095.04,703.17 1106.22,703.17 C1117.40,703.17 1122.99,703.17 1134.17,703.17 C1145.34,703.17 1150.93,703.17 1162.11,703.17 C1173.29,703.17 1178.88,703.17 1190.06,703.17 C1201.23,703.17 1206.82,703.17 1218.00,703.17 C1229.18,703.17 1234.77,703.17 1245.94,703.17 C1257.12,703.17 1262.71,703.17 1273.89,703.17 C1285.07,703.17 1290.66,703.17 1301.83,703.17 C1313.01,703.17 1318.60,703.17 1329.78,703.17 C1340.96,703.17 1346.54,703.17 1357.72,703.17 C1368.90,703.17 1374.49,703.17 1385.67,703.17 C1396.84,703.17 1402.43,703.17 1413.61,703.17 C1424.79,703.17 1430.38,703.17 1441.56,703.17" fill="none" stroke="#6edc96" stroke-width="2"/><path d="M966.50,702.01 C977.68,701.87 983.27,701.77 994.44,701.67 C1005.62,701.57 1011.21,701.56 1022.39,701.51 C1033.57,701.46 1039.16,701.44 1050.33,701.42 C1061.51,701.41 1067.10,701.38 1078.28,701.42 C1089.46,701.47 1095.05,701.52 1106.22,701.67 C1117.40,701.82 1122.99,701.94 1134.17,702.17 C1145.35,702.40 1150.93,702.67 1162.11,702.84 C1173.29,703.00 1178.88,702.97 1190.06,703.00 C1201.23,703.04 1206.82,703.00 1218.00,703.00 C1229.18,703.00 1234.77,703.00 1245.94,703.00 C1257.12,703.00 1262.71,703.00 1273.89,703.00 C1285.07,703.00 1290.66,703.00 1301.83,703.00 C1313.01,703.00 1318.60,703.00 1329.78,703.00 C1340.96,703.00 1346.54,703.00 1357.72,703.00" fill="none" stroke="#c6dc64" stroke-width="1.8"/><path d="M966.50,702.84 C977.68,702.77 983.27,702.74 994.44,702.67 C1005.62,702.60 1011.21,702.55 1022.39,702.50 C1033.57,702.45 1039.16,702.44 1050.33,702.42 C1061.51,702.40 1067.10,702.37 1078.28,702.42 C1089.46,702.47 1095.04,702.57 1106.22,702.67 C1117.40,702.77 1122.99,702.82 1134.17,702.92" fill="none" stroke="#d84848" stroke-width="2.3"/><rect x="930.00" y="492.60" width="39.5" height="12.2" fill="#f0f0f0" stroke="#e06464" stroke-width="1.5"/><text x="975.85" y="502.90" font-size="11.6" fill="#666">EEKAS-10</text><rect x="1042.60" y="492.60" width="39.5" height="12.2" fill="#f0f0f0" stroke="#c6dc64" stroke-width="1.5"/><text x="1088.45" y="502.90" font-size="11.6" fill="#666">EEKAS-1</text><rect x="1148.70" y="492.60" width="39.5" height="12.2" fill="#f0f0f0" stroke="#6edc96" stroke-width="1.5"/><text x="1194.55" y="502.90" font-size="11.6" fill="#666">EEKAS-2</text><rect x="1254.80" y="492.60" width="39.5" height="12.2" fill="#f0f0f0" stroke="#4a80dc" stroke-width="1.5"/><text x="1300.65" y="502.90" font-size="11.6" fill="#666">EEKAS-3</text><rect x="1360.90" y="492.60" width="39.5" height="12.2" fill="#f0f0f0" stroke="#b464e0" stroke-width="1.5"/><text x="1406.75" y="502.90" font-size="11.6" fill="#666">EEKAS-4</text><rect x="986.30" y="514.50" width="39.5" height="12.2" fill="#f0f0f0" stroke="#e06464" stroke-width="1.5"/><text x="1032.15" y="524.80" font-size="11.6" fill="#666">EEKAS-5</text><rect x="1092.40" y="514.50" width="39.5" height="12.2" fill="#f0f0f0" stroke="#c6dc64" stroke-width="1.5"/><text x="1138.25" y="524.80" font-size="11.6" fill="#666">EEKAS-7</text><rect x="1198.50" y="514.50" width="39.5" height="12.2" fill="#f0f0f0" stroke="#6edc96" stroke-width="1.5"/><text x="1244.35" y="524.80" font-size="11.6" fill="#666">EEKAS-8</text><rect x="1304.60" y="514.50" width="39.5" height="12.2" fill="#f0f0f0" stroke="#4a80dc" stroke-width="1.5"/><text x="1350.45" y="524.80" font-size="11.6" fill="#666">EEKAS-9</text></svg>
</body></html>
